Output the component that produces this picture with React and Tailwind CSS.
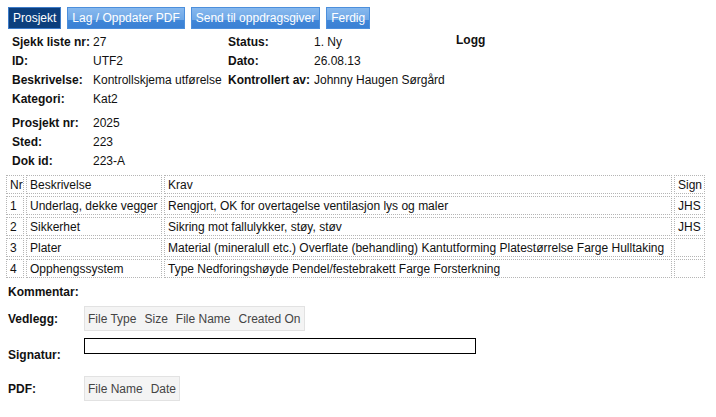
import React from "react";

const buttons = [
    { label: "Prosjekt", active: true },
    { label: "Lag / Oppdater PDF" },
    { label: "Send til oppdragsgiver" },
    { label: "Ferdig" },
];

const rows = [
    { nr: "1", besk: "Underlag, dekke vegger", krav: "Rengjort, OK for overtagelse ventilasjon lys og maler", sign: "JHS" },
    { nr: "2", besk: "Sikkerhet", krav: "Sikring mot fallulykker, støy, støv", sign: "JHS" },
    { nr: "3", besk: "Plater", krav: "Material (mineralull etc.) Overflate (behandling) Kantutforming Platestørrelse Farge Hulltaking", sign: "" },
    { nr: "4", besk: "Opphengssystem", krav: "Type Nedforingshøyde Pendel/festebrakett Farge Forsterkning", sign: "" },
];

const cell = "border border-dotted border-[#b5b5b5] px-[3px] h-[19px] align-middle whitespace-nowrap overflow-hidden";

const App = () => {
    return (
        <div className="w-[716px] h-[417px] bg-white text-[12px] text-[#111] font-['Liberation_Sans',Arial,sans-serif] leading-none overflow-hidden">
            {/* toolbar */}
            <div className="flex gap-[6px] pl-[8px] pt-[7px]">
                {buttons.map(b => (
                    <button
                        key={b.label}
                        className={
                            b.active
                                ? "h-[22px] px-[4px] text-white text-[12px] bg-[#0c3f7d] border border-[#3d7cc9]"
                                : "h-[22px] px-[4px] text-white text-[12px] border border-[#4c8fdc] bg-[linear-gradient(to_bottom,#86b8ee_0%,#6ea7e6_60%,#3f86d8_62%,#3a80d4_100%)]"
                        }
                    >
                        {b.label}
                    </button>
                ))}
            </div>

            {/* header info */}
            <div className="flex pl-[12px] pt-[3px]">
                <div className="grid grid-cols-[81px_135px_86px_141px] auto-rows-[19px] items-center">
                    <span className="font-bold">Sjekk liste nr:</span>
                    <span>27</span>
                    <span className="font-bold">Status:</span>
                    <span>1. Ny</span>

                    <span className="font-bold">ID:</span>
                    <span>UTF2</span>
                    <span className="font-bold">Dato:</span>
                    <span>26.08.13</span>

                    <span className="font-bold">Beskrivelse:</span>
                    <span>Kontrollskjema utførelse</span>
                    <span className="font-bold">Kontrollert av:</span>
                    <span className="whitespace-nowrap">Johnny Haugen Sørgård</span>

                    <span className="font-bold">Kategori:</span>
                    <span>Kat2</span>
                </div>
                <div className="font-bold pt-[2px] pl-[1px]">Logg</div>
            </div>

            <div className="grid grid-cols-[81px_100px] auto-rows-[19px] items-center pl-[12px] pt-[5px]">
                <span className="font-bold">Prosjekt nr:</span>
                <span>2025</span>
                <span className="font-bold">Sted:</span>
                <span>223</span>
                <span className="font-bold">Dok id:</span>
                <span>223-A</span>
            </div>

            {/* checklist */}
            <table className="ml-[4px] mt-[3px] w-[703px] table-fixed border-separate border-spacing-[2px] text-[12px]">
                <thead>
                    <tr className="text-left">
                        <th className={`${cell} font-normal w-[18px]`}>Nr</th>
                        <th className={`${cell} font-normal w-[136px]`}>Beskrivelse</th>
                        <th className={`${cell} font-normal`}>Krav</th>
                        <th className={`${cell} font-normal w-[31px] px-[2px]`}>Sign</th>
                    </tr>
                </thead>
                <tbody>
                    {rows.map(r => (
                        <tr key={r.nr}>
                            <td className={cell}>{r.nr}</td>
                            <td className={cell}>{r.besk}</td>
                            <td className={cell}>{r.krav}</td>
                            <td className={`${cell} px-[2px]`}>{r.sign}</td>
                        </tr>
                    ))}
                </tbody>
            </table>

            {/* footer fields */}
            <div className="pl-[8px] pt-[5px]">
                <div className="font-bold h-[14px] flex items-center">Kommentar:</div>

                <div className="flex items-center mt-[7px]">
                    <span className="font-bold w-[76px]">Vedlegg:</span>
                    <div className="flex gap-[8px] h-[25px] items-center px-[3px] bg-[#f4f4f4] border border-[#e2e2e2] text-[#444]">
                        <span>File Type</span>
                        <span>Size</span>
                        <span>File Name</span>
                        <span>Created On</span>
                    </div>
                </div>

                <div className="flex mt-[7px]">
                    <span className="font-bold w-[76px] pt-[11px]">Signatur:</span>
                    <div className="w-[392px] h-[16px] border border-black bg-white"></div>
                </div>

                <div className="flex items-center mt-[15px]">
                    <span className="font-bold w-[76px]">PDF:</span>
                    <div className="flex gap-[8px] h-[25px] items-center px-[3px] bg-[#f4f4f4] border border-[#e2e2e2] text-[#444]">
                        <span>File Name</span>
                        <span>Date</span>
                    </div>
                </div>
            </div>
        </div>
    );
};

export default App;
